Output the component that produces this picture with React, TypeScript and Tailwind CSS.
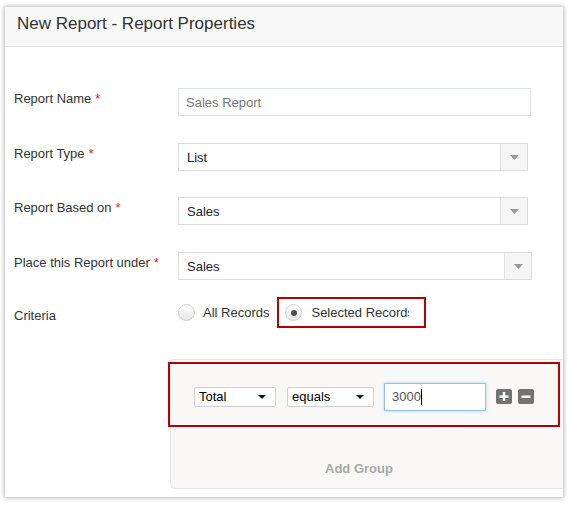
import React from "react";

function Req() {
  return <span className="text-[#e4151b] ml-[4px]">*</span>;
}

function Select({ w, value }: { w: string; value: string }) {
  return (
    <div className={`${w} h-[28px] border border-[#dcdcdc] bg-white flex`}>
      <div className="flex-1 flex items-center pl-[8px] pt-[2px] text-[13px] text-[#222]">{value}</div>
      <div className="w-[27px] bg-[#f5f5f5] border-l border-[#e2e2e2] flex items-center justify-center">
        <svg width="9" height="5" viewBox="0 0 9 5">
          <path d="M0 0 L9 0 L4.5 5 Z" fill="#9a9a9a" />
        </svg>
      </div>
    </div>
  );
}

function SmallSelect({ w, value }: { w: string; value: string }) {
  return (
    <div className={`${w} h-[20px] border border-[#cfcfcf] rounded-[2px] bg-white flex items-center justify-between pl-[4px] pr-[9px] text-[13px] text-black`}>
      <span className="pt-[1px]">{value}</span>
      <svg width="8" height="4" viewBox="0 0 8 4">
        <path d="M0 0 L8 0 L4 4 Z" fill="#111" />
      </svg>
    </div>
  );
}

function Radio({ checked }: { checked?: boolean }) {
  return (
    <div className="w-[17px] h-[17px] rounded-full border border-[#cfcfcf] bg-gradient-to-b from-[#ffffff] to-[#e6e6e6] flex items-center justify-center shrink-0">
      {checked && <div className="w-[6px] h-[6px] rounded-full bg-[#4d4d4d]" />}
    </div>
  );
}

export default function App() {
  return (
    <div className="w-[571px] h-[505px] bg-white pl-[5px] pt-[7px] font-['Liberation_Sans',Arial,sans-serif]">
      <div className="w-[558px] h-[490px] bg-white shadow-[0_0_4px_1px_rgba(0,0,0,0.28)] flex flex-col">
        <div className="h-[40px] shrink-0 bg-[#f8f8f8] border-b border-[#e2e2e2] pl-[12px] pt-[7px] text-[17px] leading-[20px] text-[#333]">
          New Report - Report Properties
        </div>
        <div className="pt-[41px] flex flex-col">
          <div className="h-[55px] flex">
            <div className="w-[173px] shrink-0 pl-[9px] pt-[3px] text-[13px] leading-[16px] text-[#333]">
              Report Name<Req />
            </div>
            <div className="w-[353px] h-[28px] border border-[#dae2ea] flex items-center pl-[7px] pt-[2px] text-[13px] text-[#777]">
              Sales Report
            </div>
          </div>
          <div className="h-[54px] flex">
            <div className="w-[173px] shrink-0 pl-[9px] pt-[3px] text-[13px] leading-[16px] text-[#333]">
              Report Type<Req />
            </div>
            <Select w="w-[350px]" value="List" />
          </div>
          <div className="h-[55px] flex">
            <div className="w-[173px] shrink-0 pl-[9px] pt-[3px] text-[13px] leading-[16px] text-[#333]">
              Report Based on<Req />
            </div>
            <Select w="w-[350px]" value="Sales" />
          </div>
          <div className="h-[45px] flex">
            <div className="w-[173px] shrink-0 pl-[9px] pt-[3px] text-[13px] leading-[16px] text-[#333]">
              Place this Report under<Req />
            </div>
            <Select w="w-[354px]" value="Sales" />
          </div>
          <div className="h-[31px] flex items-center">
            <div className="w-[173px] shrink-0 pl-[9px] pt-[7px] text-[13px] leading-[16px] text-[#333]">Criteria</div>
            <Radio />
            <span className="ml-[8px] pt-[1px] text-[13px] text-[#333]">All Records</span>
            <div className="ml-[8px] h-[31px] border-2 border-[#b50000] flex items-center pl-[6px] pr-[15px]">
              <Radio checked />
              <span className="ml-[9px] pt-[1px] w-[98px] overflow-hidden whitespace-nowrap text-[13px] text-[#333]">
                Selected Records
              </span>
            </div>
          </div>
          <div className="mt-[31px] ml-[165px] h-[130px] bg-[#f9f8f6] border-t border-l border-b border-[#e6e6e6] rounded-tl-[3px] rounded-bl-[6px]">
            <div className="mt-[2px] ml-[-3px] w-[392px] h-[65px] border-2 border-[#b50000] flex items-center pt-[4px] pl-[24px]">
              <SmallSelect w="w-[82px]" value="Total" />
              <div className="w-[11px]" />
              <SmallSelect w="w-[87px]" value="equals" />
              <div className="w-[10px]" />
              <div className="w-[102px] h-[28px] border border-[#93c3ea] shadow-[0_0_3px_rgba(90,160,230,0.45)] bg-white flex items-center pl-[7px] text-[13px] text-[#555]">
                3000<span className="w-[1px] h-[16px] bg-black" />
              </div>
              <div className="w-[10px]" />
              <svg width="16" height="15" viewBox="0 0 16 15">
                <rect x="0" y="0" width="16" height="15" rx="2" fill="#727272" />
                <rect x="3.5" y="6.5" width="9" height="2.5" fill="#fff" />
                <rect x="6.75" y="3" width="2.5" height="9" fill="#fff" />
              </svg>
              <div className="w-[6px]" />
              <svg width="16" height="15" viewBox="0 0 16 15">
                <rect x="0" y="0" width="16" height="15" rx="2" fill="#727272" />
                <rect x="3.5" y="6.5" width="9" height="2.5" fill="#fff" />
              </svg>
            </div>
            <div className="mt-[34px] ml-[154px] text-[13px] leading-[16px] font-bold text-[#a8a8a8]">Add Group</div>
          </div>
        </div>
      </div>
    </div>
  );
}
